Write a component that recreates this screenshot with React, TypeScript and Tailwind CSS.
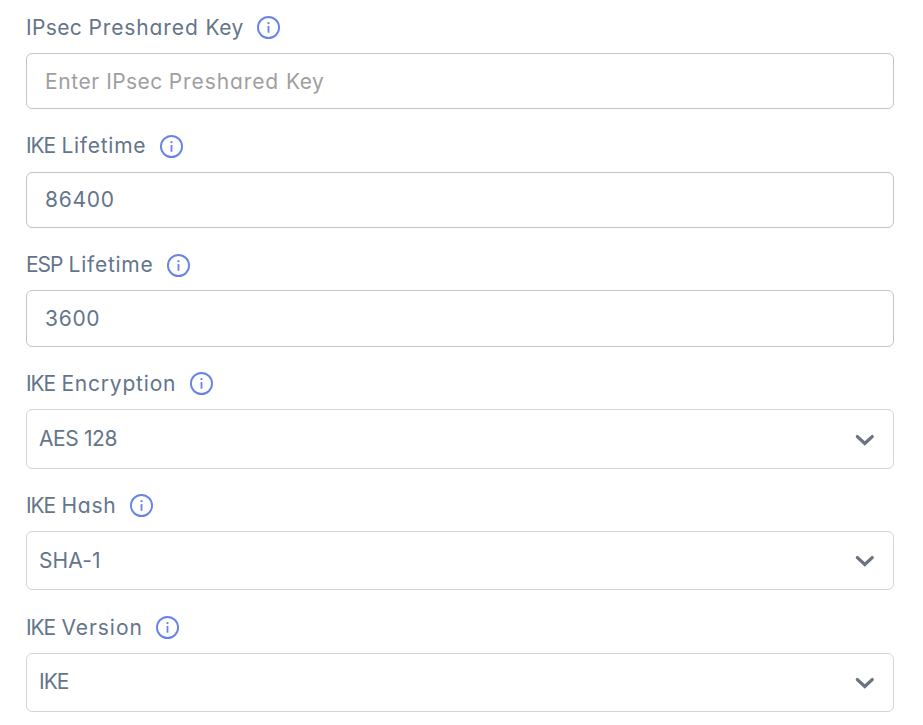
import React from "react";

// A run of text paired with its letter spacing class.
type Run = [string, string];

type Field = {
  label: Run[];
  value: Run[];
  placeholder?: boolean;
  select?: boolean;
  row: string;
  labelBox: string;
  labelShift?: string;
  box: string;
  valueShift?: string;
};

const ike: Run = ["IKE", "tracking-[-1.1px]"];
const esp: Run = ["ESP", "tracking-[-1.1px]"];
const gap: Run = [" ", "tracking-[0.4px]"];

const fields: Field[] = [
  {
    label: [["IPsec ", "tracking-[0.35px]"], ["Preshared ", "tracking-[0.9px]"], ["Key", "tracking-[0.4px]"]],
    value: [["Enter ", "tracking-[0.6px]"], ["IPsec ", "tracking-[0.35px]"], ["Preshared ", "tracking-[0.9px]"], ["Key", "tracking-[0.5px]"]],
    placeholder: true,
    row: "mt-4 mb-3.5",
    labelBox: "w-[231px]",
    box: "h-14",
  },
  {
    label: [ike, gap, ["Lifetime", "tracking-[0.75px]"]],
    value: [["86400", "tracking-[0.7px]"]],
    row: "mt-[26px] mb-3.5",
    labelBox: "w-[134px]",
    labelShift: "-top-px",
    box: "h-14",
    valueShift: "-top-px",
  },
  {
    label: [esp, gap, ["Lifetime", "tracking-[0.75px]"]],
    value: [["3600", "tracking-[0.7px]"]],
    row: "mt-[26px] mb-[13px]",
    labelBox: "w-[141px]",
    labelShift: "-top-px",
    box: "h-[57px]",
  },
  {
    label: [ike, gap, ["Encryption", "tracking-[0.8px]"]],
    value: [["AES 128", "tracking-[-0.4px]"]],
    select: true,
    row: "mt-[25px] mb-3.5",
    labelBox: "w-[164px]",
    box: "h-[60px]",
    valueShift: "-top-px",
  },
  {
    label: [ike, gap, ["Hash", "tracking-[0.8px]"]],
    value: [["SHA-1", "tracking-[0.1px]"]],
    select: true,
    row: "mt-[25px] mb-3.5",
    labelBox: "w-[104px]",
    box: "h-[59px]",
  },
  {
    label: [ike, gap, ["Version", "tracking-[0.95px]"]],
    value: [["IKE", "tracking-[-1px]"]],
    select: true,
    row: "mt-[26px] mb-3.5",
    labelBox: "w-[130px]",
    box: "h-[59px]",
    valueShift: "-top-px",
  },
];

function Runs({ runs }: { runs: Run[] }) {
  return (
    <>
      {runs.map(([text, tracking]) => (
        <span key={text} className={tracking}>
          {text}
        </span>
      ))}
    </>
  );
}

function InfoIcon() {
  return (
    <svg className="h-[23px] w-[23px] shrink-0" viewBox="0 0 23 23" fill="none">
      <circle cx="11.5" cy="11.5" r="10.55" stroke="#6783e8" strokeWidth="1.9" />
      <rect x="10.6" y="10" width="1.8" height="6.8" rx="0.4" fill="#6783e8" />
      <circle cx="11.5" cy="7.2" r="1.1" fill="#6783e8" />
    </svg>
  );
}

function Chevron() {
  return (
    <svg className="mt-0.5 h-[13px] w-5 shrink-0" viewBox="0 0 20 13" fill="none">
      <path d="M2.4 2.6 9.8 9.4l7.4-6.8" stroke="#6b7280" strokeWidth="3.3" strokeLinecap="round" strokeLinejoin="miter" />
    </svg>
  );
}

export default function App() {
  return (
    <form className="flex h-[725px] w-[923px] flex-col overflow-hidden bg-white pr-[29px] pl-[26px] font-[Inter,'Open_Sans',sans-serif] text-[21px] leading-[23px] text-[#64748b] [font-feature-settings:'cv11']">
      {fields.map((f, i) => (
        <div key={i} className="flex flex-col">
          <div className={`flex h-[23px] items-center ${f.row}`}>
            <label className={`shrink-0 whitespace-pre ${f.labelBox}`}>
              <span className={`relative ${f.labelShift ?? ""}`}>
                <Runs runs={f.label} />
              </span>
            </label>
            <InfoIcon />
          </div>
          <div
            className={`flex items-center justify-between rounded-md border ${f.box} ${
              f.select ? "border-[#d1d5db] pr-[18px] pl-3" : "border-[#c2c4c8] px-[18px]"
            }`}
          >
            <span className={`relative whitespace-pre ${f.valueShift ?? ""} ${f.placeholder ? "text-[#9f9f9f]" : ""}`}>
              <Runs runs={f.value} />
            </span>
            {f.select && <Chevron />}
          </div>
        </div>
      ))}
    </form>
  );
}
